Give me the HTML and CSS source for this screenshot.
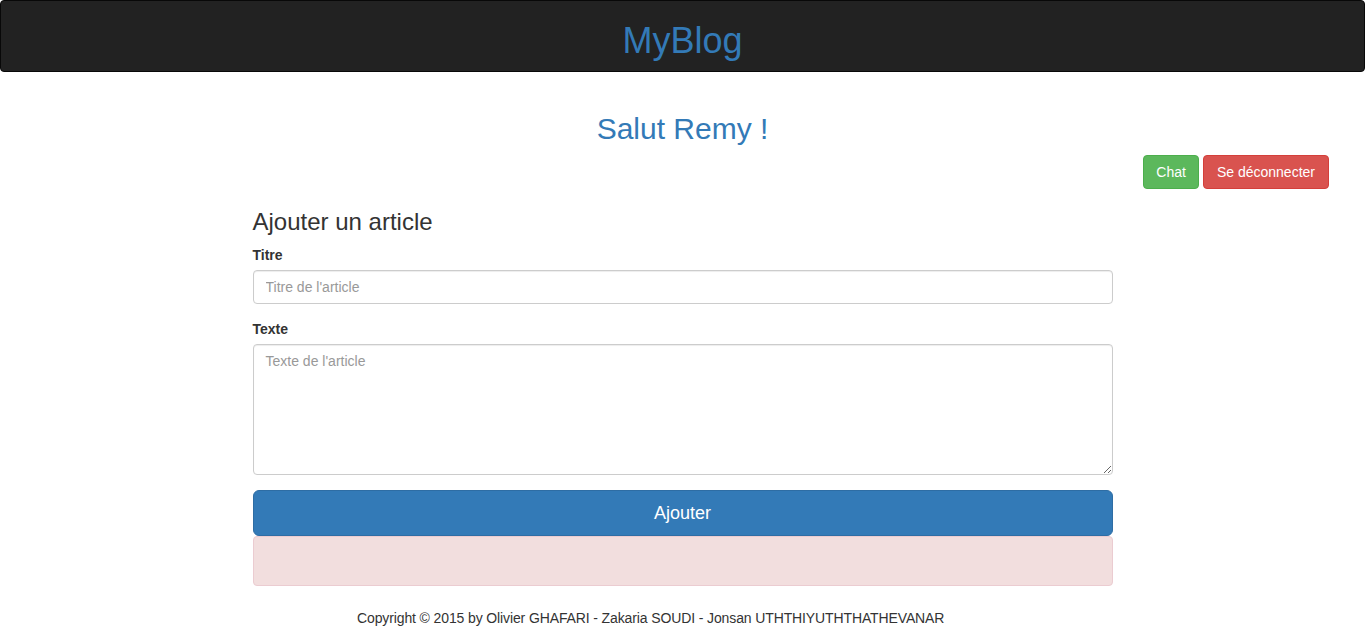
FILE: index.html
```html
<!DOCTYPE html>
<html lang="fr">
<head>
<meta charset="utf-8">
<title>MyBlog</title>
<link rel="stylesheet" href="styles.css">
</head>
<body>
<nav class="navbar">
  <h1 class="brand">MyBlog</h1>
</nav>
<h2 class="greeting">Salut Remy !</h2>
<div class="actions">
  <a class="btn btn-success">Chat</a>
  <a class="btn btn-danger">Se déconnecter</a>
</div>
<main class="content">
  <h3 class="section-title">Ajouter un article</h3>
  <form class="article-form">
    <div class="form-group">
      <label class="form-label" for="titre">Titre</label>
      <input class="form-control" id="titre" type="text" placeholder="Titre de l'article">
    </div>
    <div class="form-group">
      <label class="form-label" for="texte">Texte</label>
      <textarea class="form-control textarea" id="texte" placeholder="Texte de l'article"></textarea>
    </div>
    <button type="button" class="btn-primary-lg">Ajouter</button>
  </form>
  <div class="alert-danger"></div>
</main>
<footer class="footer">Copyright © 2015 by Olivier GHAFARI - Zakaria SOUDI - Jonsan UTHTHIYUTHTHATHEVANAR</footer>
<div class="bottom-rule"></div>
</body>
</html>
```
FILE: styles.css
```css
* { box-sizing: border-box; }
html, body { margin: 0; padding: 0; }
body {
  font-family: "Liberation Sans", Arial, Helvetica, sans-serif;
  font-size: 14px;
  line-height: 20px;
  color: #333;
  background: #fff;
}
.navbar {
  background: #222;
  border: 1px solid #080808;
  border-radius: 4px;
  margin-bottom: 20px;
  text-align: center;
}
.brand {
  margin: 20px 0 10px;
  font-size: 36px;
  font-weight: 400;
  line-height: 39.6px;
  color: #337ab7;
}
.greeting {
  margin: 40px 0 10px;
  font-size: 30px;
  font-weight: 400;
  line-height: 33px;
  color: #337ab7;
  text-align: center;
}
.actions {
  display: flex;
  justify-content: flex-end;
  gap: 4px;
  padding-right: 36px;
}
.btn {
  display: inline-block;
  padding: 6px 12px;
  font-size: 14px;
  line-height: 20px;
  border: 1px solid transparent;
  border-radius: 4px;
  color: #fff;
  cursor: pointer;
}
.btn-success { background: #5cb85c; border-color: #4cae4c; }
.btn-danger { background: #d9534f; border-color: #d43f3a; padding: 6px 13px; }
.content {
  width: 860px;
  margin: 0 auto;
}
.section-title {
  margin: 20px 0 10px;
  font-size: 24px;
  font-weight: 400;
  line-height: 26.4px;
  color: #333;
}
.article-form { margin: 0; }
.form-group { margin-bottom: 15px; }
.form-label {
  display: block;
  margin-bottom: 5px;
  font-weight: 700;
  font-size: 14px;
  line-height: 20px;
}
.form-control {
  display: block;
  width: 100%;
  height: 34px;
  padding: 6px 12px;
  font-family: inherit;
  font-size: 14px;
  line-height: 20px;
  color: #555;
  background: #fff;
  border: 1px solid #ccc;
  border-radius: 4px;
  box-shadow: inset 0 1px 1px rgba(0,0,0,.075);
  margin: 0;
}
.form-control::placeholder { color: #999; }
.textarea {
  height: 131px;
  resize: vertical;
}
.btn-primary-lg {
  display: block;
  width: 100%;
  height: 46px;
  padding: 10px 16px;
  font-family: inherit;
  font-size: 18px;
  line-height: 24px;
  color: #fff;
  background: #337ab7;
  border: 1px solid #2e6da4;
  border-radius: 6px;
  cursor: pointer;
  margin: 0;
}
.alert-danger {
  height: 50px;
  background: #f2dede;
  border: 1px solid #ebccd1;
  border-radius: 4px;
  margin-bottom: 22px;
}
.footer {
  padding-left: 357px;
  line-height: 20px;
  letter-spacing: -0.12px;
  color: #333;
}
.bottom-rule {
  margin-top: 13px;
  border-top: 1px solid #eee;
}
```
